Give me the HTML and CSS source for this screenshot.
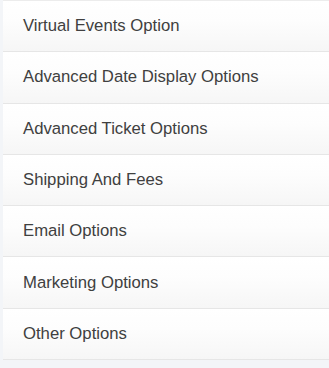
FILE: index.html
```html
<!DOCTYPE html>
<html>
<head>
<meta charset="utf-8">
<link rel="stylesheet" href="styles.css">
</head>
<body>
<div class="panel">
  <div class="row">Virtual Events Option</div>
  <div class="row">Advanced Date Display Options</div>
  <div class="row">Advanced Ticket Options</div>
  <div class="row">Shipping And Fees</div>
  <div class="row">Email Options</div>
  <div class="row">Marketing Options</div>
  <div class="row">Other Options</div>
</div>
</body>
</html>
```
FILE: styles.css
```css
html, body {
  margin: 0;
  padding: 0;
}
body {
  background: #f3f5f8;
  font-family: "Liberation Sans", Arial, sans-serif;
  width: 329px;
  height: 368px;
  overflow: hidden;
}
.panel {
  margin-left: 3px;
  background: #fff;
  border-top: 1px solid #ececec;
}
.row {
  box-sizing: border-box;
  height: 51.3px;
  display: flex;
  align-items: center;
  padding-left: 20px;
  font-size: 16.7px;
  color: #404040;
  background: linear-gradient(to bottom, #ffffff 0%, #fdfdfd 40%, #f6f6f6 100%);
  border-bottom: 1px solid #e6e6e6;
}
```
